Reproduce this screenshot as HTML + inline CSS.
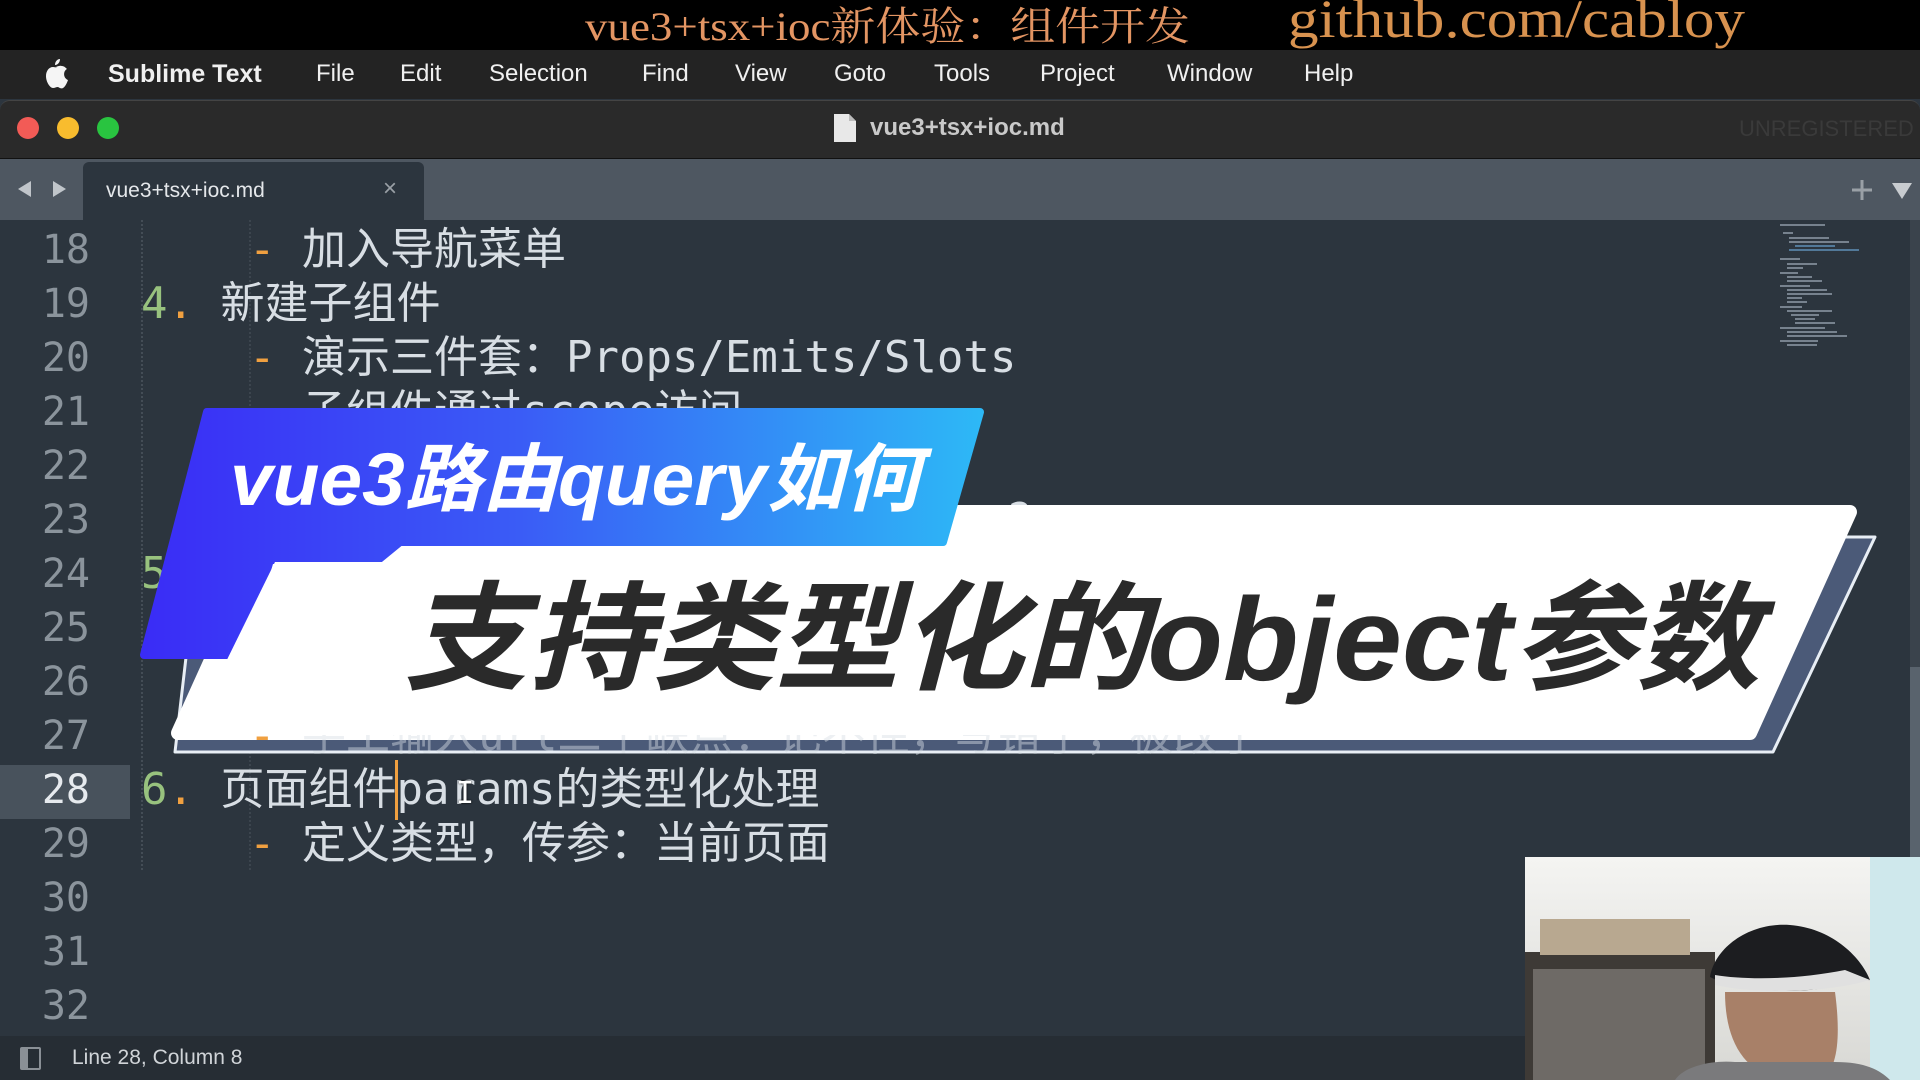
<!DOCTYPE html>
<html><head><meta charset="utf-8">
<style>
*{margin:0;padding:0;box-sizing:border-box}
body{width:1920px;height:1080px;overflow:hidden;background:#2c353e;position:relative;font-family:"Liberation Sans","Noto Sans CJK SC",sans-serif}
.abs{position:absolute}
#top{left:0;top:0;width:1920px;height:50px;background:#000}
#menu{left:0;top:50px;width:1920px;height:49px;background:#232323;color:#f0f0f0;font-size:24px}
#menu span{position:absolute;top:10px}
#titlebar{left:0;top:100px;width:1920px;height:58px;background:#2a2a2a;border-top:1px solid #444;border-radius:10px 10px 0 0}
.tl{position:absolute;top:16px;width:22px;height:22px;border-radius:50%}
#tabbar{left:0;top:158px;width:1920px;height:62px;background:#4e5761;border-top:1px solid #111}
#tab{left:83px;top:162px;width:341px;height:58px;background:#2c353e;border-radius:6px 6px 0 0}
#editor{left:0;top:220px;width:1910px;height:816px;background:#2c353e}
.ln{position:absolute;left:0;width:90px;text-align:right;font-family:"DejaVu Sans Mono",monospace;font-size:40px;color:#8b949c;line-height:54px;height:54px}
.tx{position:absolute;font-family:"DejaVu Sans Mono","Noto Sans CJK SC",monospace;font-size:44px;color:#d8dee4;line-height:54px;height:54px;white-space:pre}
.o{color:#f0a040}.g{color:#98c27e}
#status{left:0;top:1036px;width:1920px;height:44px;background:#262d34;color:#d0d4d8;font-size:21px}
</style></head><body>
<div id="top" class="abs"></div>
<svg class="abs" style="left:0;top:0" width="1920" height="50">
<text x="585" y="40" font-family="Liberation Serif,Noto Serif CJK SC,serif" font-size="40" fill="#e39563" textLength="605" lengthAdjust="spacingAndGlyphs">vue3+tsx+ioc新体验：组件开发</text>
<text x="1288" y="37" font-family="Liberation Serif,serif" font-size="54" fill="#d8924f" textLength="457" lengthAdjust="spacingAndGlyphs">github.com/cabloy</text>
</svg>
<div id="menu" class="abs">
<svg style="position:absolute;left:42px;top:9px" width="26" height="31" viewBox="0 0 26 31"><path d="M18 0c0 3-2 6-5 6 0-3 2-6 5-6zM13 8c2 0 4-2 7-1 2 0 4 2 5 3-4 2-4 9 1 11-1 3-3 7-5 8-2 1-3 0-5-1-2 0-3 1-5 1-3 0-7-6-7-12 0-5 3-9 7-9 2 0 3 1 4 1z" fill="#f5f5f5"/></svg>
<span style="left:108px;font-weight:bold;font-size:25px">Sublime Text</span>
<span style="left:316px">File</span><span style="left:400px">Edit</span><span style="left:489px">Selection</span><span style="left:642px">Find</span><span style="left:735px">View</span><span style="left:834px">Goto</span><span style="left:934px">Tools</span><span style="left:1040px">Project</span><span style="left:1167px">Window</span><span style="left:1304px">Help</span>
</div>
<div id="titlebar" class="abs">
<div class="tl" style="left:17px;background:#f25b56"></div>
<div class="tl" style="left:57px;background:#f8bc2e"></div>
<div class="tl" style="left:97px;background:#29c440"></div>
<svg style="position:absolute;left:833px;top:12px" width="24" height="30"><path d="M1 1h15l7 7v21H1z" fill="#e8e8e8"/><path d="M16 1v7h7" fill="#bbb"/></svg>
<div style="position:absolute;left:870px;top:13px;font-size:24px;font-weight:bold;color:#c9c9c9">vue3+tsx+ioc.md</div>
<div style="position:absolute;left:1739px;top:15px;font-size:22px;color:#3a3a3a">UNREGISTERED</div>
</div>
<div id="tabbar" class="abs">
<svg style="position:absolute;left:18px;top:20px" width="50" height="20"><path d="M0 10l13-8v16z" fill="#c0c5ca"/><path d="M48 10l-13-8v16z" fill="#c0c5ca"/></svg>
<svg style="position:absolute;left:1852px;top:20px" width="60" height="22"><path d="M10 1v20M0 11h20" stroke="#9aa0a6" stroke-width="3"/><path d="M40 4h20l-10 16z" fill="#c8ccd0"/></svg>
</div>
<div id="tab" class="abs"><div style="position:absolute;left:23px;top:17px;font-size:21px;color:#e4e7ea">vue3+tsx+ioc.md</div><div style="position:absolute;left:300px;top:13px;font-size:24px;color:#9aa0a6">×</div></div>
<div id="editor" class="abs">
<div style="position:absolute;left:0;top:545px;width:130px;height:54px;background:#48525c"></div>
<div style="position:absolute;left:141px;top:0;height:650px;border-left:2px dotted #444d56"></div>
<div style="position:absolute;left:249px;top:0;height:650px;border-left:2px dotted #3c454e"></div>
</div>
<svg class="abs" style="left:1775px;top:222px" width="110" height="125">
<g fill="#8a96a2" opacity="0.8">
<rect x="5" y="2" width="45" height="2"/><rect x="8" y="10" width="10" height="2"/><rect x="14" y="15" width="40" height="2"/><rect x="14" y="19" width="60" height="2"/><rect x="20" y="23" width="40" height="2" fill="#5c8ab0"/><rect x="14" y="27" width="70" height="2" fill="#5c8ab0"/>
<rect x="5" y="36" width="20" height="2"/><rect x="12" y="41" width="30" height="2"/><rect x="12" y="45" width="16" height="2"/><rect x="5" y="50" width="18" height="2"/><rect x="12" y="54" width="25" height="2"/><rect x="12" y="58" width="35" height="2"/><rect x="5" y="63" width="30" height="2"/><rect x="12" y="67" width="40" height="2"/><rect x="12" y="71" width="45" height="2"/><rect x="12" y="75" width="15" height="2"/><rect x="12" y="79" width="20" height="2"/><rect x="5" y="84" width="22" height="2"/><rect x="12" y="88" width="45" height="2"/><rect x="16" y="92" width="28" height="2"/><rect x="20" y="96" width="20" height="2"/><rect x="20" y="100" width="40" height="2"/><rect x="5" y="105" width="45" height="2"/><rect x="12" y="109" width="50" height="2"/><rect x="12" y="113" width="60" height="2"/><rect x="5" y="118" width="38" height="2"/><rect x="12" y="122" width="30" height="2"/>
</g></svg>
<div class="abs" style="left:1910px;top:220px;width:10px;height:816px;background:#3a434c"></div>
<div class="abs" style="left:1910px;top:667px;width:10px;height:200px;background:#59636d"></div>
<div class="ln" style="top:223px">18</div><div class="ln" style="top:277px">19</div><div class="ln" style="top:331px">20</div><div class="ln" style="top:385px">21</div><div class="ln" style="top:439px">22</div><div class="ln" style="top:493px">23</div><div class="ln" style="top:547px">24</div><div class="ln" style="top:601px">25</div><div class="ln" style="top:655px">26</div><div class="ln" style="top:709px">27</div><div class="ln" style="top:763px;color:#e6eaee">28</div><div class="ln" style="top:817px">29</div><div class="ln" style="top:871px">30</div><div class="ln" style="top:925px">31</div><div class="ln" style="top:979px">32</div>
<div class="tx" style="left:249px;top:223px"><span class="o">-</span> 加入导航菜单</div>
<div class="tx" style="left:141px;top:277px"><span class="g">4</span><span class="o">.</span> 新建子组件</div>
<div class="tx" style="left:249px;top:331px"><span class="o">-</span> 演示三件套：Props/Emits/Slots</div>
<div class="tx" style="left:249px;top:385px"><span class="o">-</span> 子组件通过scope访问</div>
<div class="tx" style="left:900px;top:493px">done?</div>
<div class="tx" style="left:141px;top:547px"><span class="g">5</span><span class="o">.</span></div>
<div class="tx" style="left:141px;top:763px"><span class="g">6</span><span class="o">.</span> 页面组件params的类型化处理</div>
<div class="tx" style="left:249px;top:817px"><span class="o">-</span> 定义类型，传参：当前页面</div>
<div class="abs" style="left:395px;top:760px;width:3px;height:60px;background:#f0a040"></div>
<svg class="abs" style="left:0;top:0" width="1920" height="1080">
<defs><linearGradient id="bg" x1="0" x2="1" y1="0" y2="0"><stop offset="0" stop-color="#3a2cf6"/><stop offset="0.45" stop-color="#3a5cf6"/><stop offset="1" stop-color="#2db8f6"/></linearGradient></defs>
<path d="M200 537H1875L1773 752H175Z" fill="#4b5a78" stroke="#e8eef5" stroke-width="3" stroke-linejoin="round"/>
<path d="M278 512H1850L1750 733H178Z" fill="#fff" stroke="#fff" stroke-width="14" stroke-linejoin="round"/>
<path d="M207 412H980L943 542H400L378 560H270L242 655H144Z" fill="url(#bg)" stroke="url(#bg)" stroke-width="8" stroke-linejoin="round"/>
<path d="M275 562H420L370 735H190Z" fill="#fff"/>
<text x="230" y="505" font-family="Liberation Sans,Noto Sans CJK SC,sans-serif" font-style="italic" font-weight="bold" font-size="74" fill="#fff" textLength="690" lengthAdjust="spacingAndGlyphs">vue3路由query如何</text>
<text x="404" y="680" font-family="Liberation Sans,Noto Sans CJK SC,sans-serif" font-style="italic" font-weight="bold" font-size="118" fill="#2a2a2a" textLength="1356" lengthAdjust="spacingAndGlyphs">支持类型化的object参数</text>
</svg>
<div class="tx" style="left:249px;top:709px;color:rgba(216,222,228,0.45);clip-path:inset(26px 0 0 0)"><span class="o">-</span> 手工输入url二个缺点：记不住，写错了，被改了</div>
<div class="abs" style="left:456px;top:776px;font-size:30px;color:#fff;font-family:'DejaVu Sans Mono',monospace;text-shadow:0 0 2px #000">I</div>
<div id="status" class="abs">
<div style="position:absolute;left:20px;top:11px;width:21px;height:23px;border:2px solid #8a9096;border-left-width:8px;border-radius:2px"></div>
<div style="position:absolute;left:72px;top:10px">Line 28, Column 8</div>
</div>
<svg class="abs" style="left:1525px;top:857px;z-index:5" width="395" height="223">
<defs><linearGradient id="w" x1="0" y1="0" x2="0" y2="1"><stop offset="0" stop-color="#f4f4f2"/><stop offset="1" stop-color="#d8d8d4"/></linearGradient></defs>
<rect width="395" height="223" fill="url(#w)"/>
<rect x="345" y="0" width="50" height="223" fill="#cfe8ec"/>
<rect x="0" y="95" width="190" height="128" fill="#3e3a36"/>
<rect x="8" y="112" width="172" height="111" fill="#6e6a66"/>
<rect x="15" y="62" width="150" height="36" fill="#b8a890"/>
<path d="M185 120c5-30 40-55 80-52 40 3 70 30 80 55l-35 5c-20 8-90 10-125-8z" fill="#1c1d20"/>
<path d="M190 118c30 5 80 5 130-5l25 10c-40 12-110 15-155 5z" fill="#e0e0e0"/>
<path d="M200 135c0 50 20 85 65 88h30c20-10 20-50 15-88z" fill="#a88068"/>
<path d="M150 223c10-15 40-20 60-18h100c30 0 45 8 55 18z" fill="#7a7a7c"/>
</svg>
</body></html>
